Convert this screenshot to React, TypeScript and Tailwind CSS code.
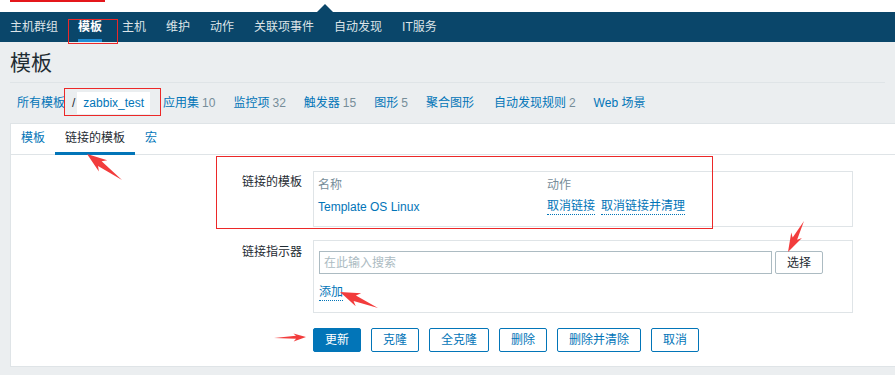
const FONT = { fontFamily: '"Liberation Sans", "Noto Sans CJK SC", sans-serif' };

const NAV = ["主机群组", "模板", "主机", "维护", "动作", "关联项事件", "自动发现", "IT服务"];

const SUBNAV: { label: string; count?: string }[] = [
  { label: "应用集", count: "10" },
  { label: "监控项", count: "32" },
  { label: "触发器", count: "15" },
  { label: "图形", count: "5" },
  { label: "聚合图形" },
  { label: "自动发现规则", count: "2" },
  { label: "Web 场景" },
];

const BUTTONS = ["克隆", "全克隆", "删除", "删除并清除", "取消"];

// annotation arrow: thin tail widening into a head at the tip
function arrowPoints(x1: number, y1: number, x2: number, y2: number, L: number, W: number, w: number) {
  const dx = x2 - x1;
  const dy = y2 - y1;
  const len = Math.hypot(dx, dy);
  const ux = dx / len;
  const uy = dy / len;
  const nx = -uy;
  const ny = ux;
  const hx = x2 - ux * L;
  const hy = y2 - uy * L;
  const bx = x2 - ux * L * 1.25;
  const by = y2 - uy * L * 1.25;
  const pts = [
    [x1, y1],
    [hx + nx * w, hy + ny * w],
    [bx + nx * W, by + ny * W],
    [x2, y2],
    [bx - nx * W, by - ny * W],
    [hx - nx * w, hy - ny * w],
  ];
  return pts.map((p) => p.join(",")).join(" ");
}

function DottedLink({ children }: { children: React.ReactNode }) {
  return (
    <span className="inline-block border-b border-dotted border-[#0275b8] leading-[15px] text-[#0275b8]">
      {children}
    </span>
  );
}

export default function App() {
  return (
    <div style={FONT} className="relative h-[375px] w-[895px] overflow-hidden bg-[#ebeef0] text-[12px] text-[#1f2c33]">
      {/* top strip */}
      <div className="relative h-[12px] bg-white">
        <div className="absolute left-[10px] top-0 h-[2px] w-[95px] bg-[#e4161b]" />
        <div className="absolute left-[317px] top-[4px] h-0 w-0 border-x-[8px] border-b-[8px] border-x-transparent border-b-[#0a466a]" />
      </div>

      {/* main menu */}
      <nav className="flex h-[30px] bg-[#0a466a]">
        {NAV.map((item) => {
          const active = item === "模板";
          return (
            <div key={item} className="flex h-full px-[10px]">
              <span
                className={
                  active
                    ? "flex h-full items-center border-y-[3px] border-t-transparent border-b-[#1f8dd6] font-bold text-white"
                    : "flex h-full items-center border-y-[3px] border-transparent text-[#dde4e8]"
                }
              >
                {item}
              </span>
            </div>
          );
        })}
      </nav>

      {/* title */}
      <div className="mx-[10px] h-[41px] border-b border-[#dfe4e7] pt-[2px] text-[21px] leading-[38px] text-[#1f2c33]">
        模板
      </div>

      {/* breadcrumbs / sub menu */}
      <div className="flex h-[40px] items-center pl-[17px]">
        <span className="text-[#0275b8]">所有模板</span>
        <span className="ml-[7px] text-[#1f2c33]">/</span>
        <span className="ml-[2px] flex h-[22px] items-center bg-white px-[6px] text-[#0275b8]">zabbix_test</span>
        <div className="ml-[13px] flex gap-[18px]">
          {SUBNAV.map((s) => (
            <span key={s.label} className={s.label === "自动发现规则" ? "ml-[2px] text-[#0275b8]" : "text-[#0275b8]"}>
              {s.label}
              {s.count && <span className="ml-[3px] text-[#768d99]">{s.count}</span>}
            </span>
          ))}
        </div>
      </div>

      {/* form panel */}
      <div className="ml-[10px] w-[900px] border border-[#dfe4e7] bg-white pb-[14px]">
        <div className="flex h-[31px] border-b border-[#dfe4e7]">
          <div className="-mb-px flex items-center border-b-[3px] border-transparent px-[10px] text-[#0275b8]">模板</div>
          <div className="-mb-px flex items-center border-b-[3px] border-[#0275b8] px-[10px] text-[#1f2c33]">链接的模板</div>
          <div className="-mb-px flex items-center border-b-[3px] border-transparent px-[10px] text-[#0275b8]">宏</div>
        </div>

        <div className="pt-[16px]">
          {/* linked templates */}
          <div className="flex">
            <div className="w-[291px] text-right leading-[22px]">链接的模板</div>
            <div className="ml-[11px] w-[540px] border border-[#dfe4e7] pb-[8px] pl-[4px] pt-[2px]">
              <div className="grid h-[22px] grid-cols-[229px_1fr] items-center text-[#768d99]">
                <span>名称</span>
                <span>动作</span>
              </div>
              <div className="grid h-[22px] grid-cols-[229px_1fr] items-center">
                <span className="text-[#0275b8]">Template OS Linux</span>
                <span className="flex gap-[6px]">
                  <DottedLink>取消链接</DottedLink>
                  <DottedLink>取消链接并清理</DottedLink>
                </span>
              </div>
            </div>
          </div>

          {/* link new templates */}
          <div className="mt-[13px] flex">
            <div className="w-[291px] pt-[1px] text-right leading-[22px]">链接指示器</div>
            <div className="ml-[11px] w-[540px] border border-[#dfe4e7] pb-[10px] pl-[5px] pt-[10px]">
              <div className="flex h-[23px] gap-[3px]">
                <div className="flex w-[453px] items-center border border-[#acbbc2] pl-[4px] text-[#acbbc2]">
                  在此输入搜索
                </div>
                <div className="flex w-[48px] items-center justify-center rounded-[2px] border border-[#acbbc2] text-[#1f2c33]">
                  选择
                </div>
              </div>
              <div className="mt-[10px] flex h-[18px] items-center">
                <DottedLink>添加</DottedLink>
              </div>
            </div>
          </div>

          {/* actions */}
          <div className="ml-[302px] mt-[15px] flex gap-[10px]">
            <div className="flex h-[24px] items-center rounded-[2px] border border-[#0275b8] bg-[#0275b8] px-[11px] text-white">
              更新
            </div>
            {BUTTONS.map((b) => (
              <div key={b} className="flex h-[24px] items-center rounded-[2px] border border-[#0275b8] bg-white px-[11px] text-[#0275b8]">
                {b}
              </div>
            ))}
          </div>
        </div>
      </div>

      {/* annotations */}
      <div className="absolute left-[68px] top-[19px] h-[25px] w-[50px] border border-[#ec2828]" />
      <div className="absolute left-[64px] top-[88px] h-[28px] w-[97px] border border-[#ec2828]" />
      <div className="absolute left-[216px] top-[156px] h-[73px] w-[497px] border border-[#ec2828]" />
      <svg className="pointer-events-none absolute left-0 top-0" width="895" height="375">
        <g fill="#f23c3c">
          <polygon points={arrowPoints(122, 180, 87, 154, 16, 7, 3)} />
          <polygon points={arrowPoints(378, 308, 340, 292, 16, 7, 3)} />
          <polygon points={arrowPoints(804, 221, 788, 252, 15, 6, 2.5)} />
          <polygon points={arrowPoints(274, 338, 306, 337, 10, 4, 1.5)} />
        </g>
      </svg>
    </div>
  );
}
